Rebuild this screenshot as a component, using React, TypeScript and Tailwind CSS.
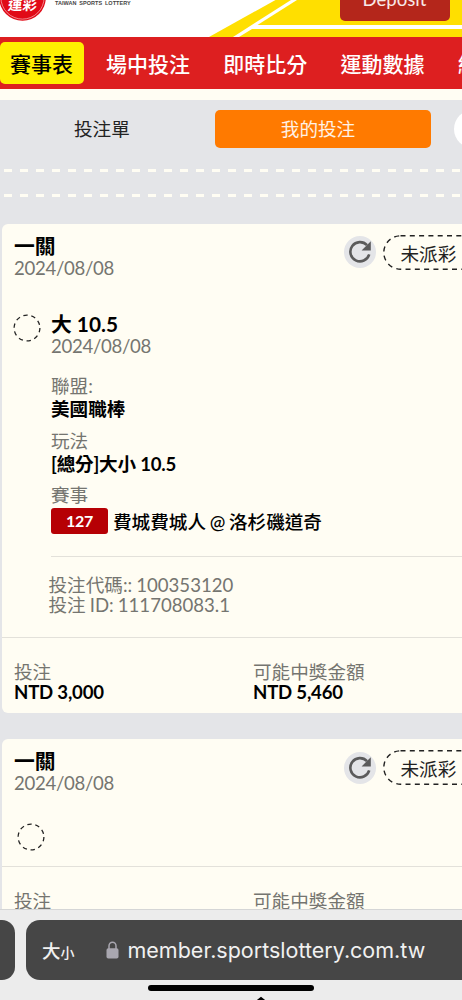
import { ReactNode } from 'react';

const NAV_ITEMS = ['賽事表', '場中投注', '即時比分', '運動數據', '統計'];

interface BetCardProps {
  children: ReactNode;
  className?: string;
  stake?: string;
  payout?: string;
}

function DashedCircle() {
  return (
    <svg className="h-7 w-7 shrink-0" viewBox="0 0 28 28" fill="none">
      <circle cx="14" cy="14" r="12.9" stroke="#222" strokeWidth="1.3" strokeDasharray="4.4 3.7" />
    </svg>
  );
}

function DashedRow() {
  return (
    <svg className="block h-[3px] w-full" preserveAspectRatio="none">
      <line x1="4" y1="1.5" x2="480" y2="1.5" stroke="#fffdf3" strokeWidth="3" strokeDasharray="8 8" />
    </svg>
  );
}

function RefreshIcon() {
  return (
    <div className="flex h-8 w-8 shrink-0 items-center justify-center rounded-full bg-[#e4e5e8]">
      <svg className="h-8 w-8" viewBox="0 0 32 32" fill="none">
        <path d="M25.2 18.4A9.6 9.6 0 1 1 23 9.2" stroke="#5b5b5b" strokeWidth="2.6" />
        <path d="M26.8 5.2v9.2h-9.2z" fill="#5b5b5b" />
      </svg>
    </div>
  );
}

function StatusPill() {
  return (
    <div className="relative ml-[7px] h-[35px] w-[112px] shrink-0">
      <svg className="absolute inset-0" width="112" height="35" viewBox="0 0 112 35" fill="none">
        <rect x="0.8" y="0.8" width="110" height="33.4" rx="16.7" stroke="#222" strokeWidth="1.4" strokeDasharray="5 4.3" />
      </svg>
      <span className="block pl-[17.5px] leading-[38px] text-[#222]">未派彩</span>
    </div>
  );
}

function Label({ children, className = '' }: { children: ReactNode; className?: string }) {
  return <p className={`h-[22px] leading-[22px] text-[#757570] ${className}`}>{children}</p>;
}

function BetCard({ children, className = '', stake, payout }: BetCardProps) {
  return (
    <section className={`ml-[1.5px] shrink-0 rounded-l-[6px] bg-[#fffdf3] ${className}`}>
      {/* Header */}
      <div className="flex h-[60px] pt-[11px]">
        <div className="-mt-px w-[342.5px] shrink-0 pl-[12.5px]">
          <h2 className="h-[23px] text-[20.8px] leading-[23px] font-bold text-black">一關</h2>
          <Label className="tracking-[-0.3px]">2024/08/08</Label>
        </div>
        <div className="flex h-[35px] shrink-0 items-center">
          <RefreshIcon />
          <StatusPill />
        </div>
      </div>

      {children}

      {/* Amounts */}
      <div className="flex border-t border-[#e3e1da] pt-[23px] pl-[12.5px]">
        <div className="w-[239px] shrink-0">
          <Label>投注</Label>
          <p className="h-[19px] leading-[18px] font-bold tracking-[-0.2px] text-black">{stake}</p>
        </div>
        <div>
          <Label>可能中獎金額</Label>
          <p className="h-[19px] leading-[18px] font-bold tracking-[-0.2px] text-black">{payout}</p>
        </div>
      </div>
    </section>
  );
}

function SiteHeader() {
  return (
    <header className="relative h-[37px] shrink-0 overflow-hidden bg-white">
      <svg className="absolute inset-0" width="462" height="37" viewBox="0 0 462 37">
        <path d="M209 37 275.5 0H291L233 37z" fill="#ffdf00" />
        <path d="M297 0H462V25H257.5z" fill="#ffdf00" />
        <path d="M252 29H462V37H239z" fill="#ffdf00" />
        <circle cx="22.5" cy="-2.5" r="23.3" fill="#e10a17" />
        <circle cx="22.5" cy="-2.5" r="21.6" fill="none" stroke="#fff" strokeWidth="0.5" />
      </svg>
      <span className="absolute top-[-5px] left-[8px] -skew-x-6 text-[14.5px] leading-[20px] font-bold text-white">運彩</span>
      <span className="absolute top-[-1px] left-[55px] font-['Liberation_Sans'] text-[5.5px] leading-[8px] font-bold tracking-[0.04px] whitespace-nowrap text-[#444] [word-spacing:1.2px]">
        TAIWAN SPORTS LOTTERY
      </span>
      <div className="absolute top-[-17px] left-[339.5px] flex h-[38px] w-[110px] items-center justify-center rounded-[5px] bg-[#b4261b] text-[18.6px] text-white/90">
        <span className="-mt-[5px]">Deposit</span>
      </div>
    </header>
  );
}

function BrowserBar() {
  return (
    <footer className="absolute inset-x-0 bottom-0 h-[91px] overflow-hidden border-t border-[#d5d6d6] bg-[#ececec] pt-[10px]">
      <div className="flex h-[60px] gap-[11px]">
        <div className="w-[15px] shrink-0 rounded-r-[13px] bg-[#464646]" />
        <div className="flex w-[460px] shrink-0 items-center rounded-l-[14px] bg-[#464646] pl-[16px] text-[#f1f1f1]">
          <div className="mt-[3px] flex w-[63px] shrink-0 items-baseline font-medium">
            <span className="text-[18.5px]">大</span>
            <span className="text-[14px]">小</span>
          </div>
          <svg className="ml-[1px] h-[18px] w-[13px] shrink-0" viewBox="0 0 13 18" fill="none">
            <path d="M3 8V5a3.5 3.7 0 0 1 7 0v3" stroke="#a9a7b0" strokeWidth="1.5" />
            <rect x="0.5" y="7.3" width="12" height="10.2" rx="1.8" fill="#a9a7b0" />
          </svg>
          <span className="mt-px ml-[8.5px] font-[Inter] text-[21.5px] whitespace-nowrap">member.sportslottery.com.tw</span>
        </div>
      </div>
      <div className="mt-[5px] ml-[148px] h-[6px] w-[165.5px] rounded-full bg-black" />
      <svg className="mt-[5px] ml-[256px] h-[6px] w-[10px]" viewBox="0 0 10 6" fill="none">
        <path d="M0 6 5 2l5 4" stroke="#000" strokeWidth="2" />
      </svg>
    </footer>
  );
}

export default function App() {
  return (
    <div className="relative flex h-[1000px] w-[462px] flex-col overflow-hidden bg-[#e4e5e8] font-[Lato,'Noto_Sans_CJK_TC',sans-serif] text-[18.6px]">
      <SiteHeader />

      <nav className="flex h-[52px] shrink-0 items-center bg-[#dd1f20] text-[21px] font-medium text-white">
        {NAV_ITEMS.map((item, index) => (
          <span
            key={item}
            className={
              index === 0
                ? 'mr-[22px] flex h-[42px] w-[84px] shrink-0 items-center rounded-[5px] bg-[#fff000] pt-[2px] pl-[10px] text-black'
                : 'mr-[33.3px] shrink-0 pt-[2px]'
            }
          >
            {item}
          </span>
        ))}
      </nav>
      <div className="h-[11px] shrink-0 bg-[#fffdf3]" />

      {/* Tabs */}
      <div className="flex h-[69px] shrink-0 pt-[10px]">
        <div className="h-[38px] w-[215px] shrink-0 pl-[74px] leading-[38px] text-[#222]">投注單</div>
        <div className="h-[38px] w-[216px] shrink-0 rounded-[5px] bg-[#ff7a00] text-center leading-[38px] text-white/90">
          <span className="relative -left-[5px]">我的投注</span>
        </div>
        <div className="ml-[23px] h-[38px] w-[38px] shrink-0 rounded-full bg-white" />
      </div>

      <div className="flex h-[54.5px] shrink-0 flex-col gap-[22px]">
        <DashedRow />
        <DashedRow />
      </div>

      <BetCard className="h-[489.5px]" stake="NTD 3,000" payout="NTD 5,460">
        <div className="flex h-[353px] pt-[28px] pl-[11.5px]">
          <div className="w-[38px] shrink-0 pt-[2px]">
            <DashedCircle />
          </div>
          <div className="grow">
            <h3 className="h-[23px] text-[20.8px] leading-[23px] font-bold text-black">大 10.5</h3>
            <Label className="tracking-[-0.3px]">2024/08/08</Label>
            <div className="pt-[18px]">
              <Label>聯盟:</Label>
              <p className="h-[23px] leading-[24px] font-bold text-black">美國職棒</p>
            </div>
            <div className="pt-[10px]">
              <Label>玩法</Label>
              <p className="h-[23px] leading-[24px] font-bold tracking-[-0.2px] text-black">[總分]大小 10.5</p>
            </div>
            <div className="pt-[9px]">
              <Label>賽事</Label>
              <div className="mt-[2px] flex h-[27px] items-center font-bold text-black">
                <span className="mr-[5px] flex h-[26px] w-[57px] items-center justify-center rounded-[3px] bg-[#b60004] text-[16px] tracking-[-0.2px] text-white">
                  127
                </span>
                <span className="pt-[3px] font-medium [word-spacing:-1px]">費城費城人 @ 洛杉磯道奇</span>
              </div>
            </div>
            <div className="mt-[21px] border-t border-[#e3e1da]" />
            <div className="-ml-[2.5px] pt-[18px] leading-[20px] text-[#757570] [word-spacing:-0.7px]">
              <p>投注代碼:: 100353120</p>
              <p>投注 ID: 111708083.1</p>
            </div>
          </div>
        </div>
      </BetCard>

      <BetCard className="mt-[26px] h-[490px]">
        <div className="h-[67px] pt-[24px] pl-[15.5px]">
          <DashedCircle />
        </div>
      </BetCard>

      <BrowserBar />
    </div>
  );
}
